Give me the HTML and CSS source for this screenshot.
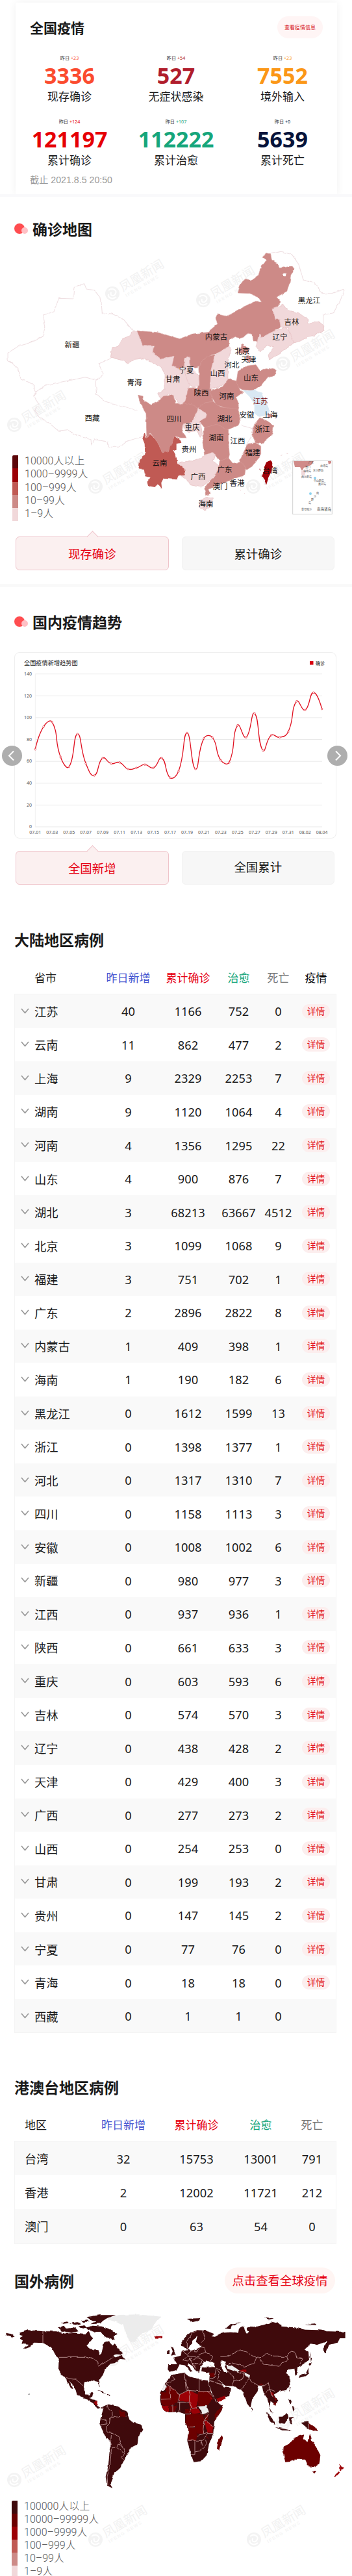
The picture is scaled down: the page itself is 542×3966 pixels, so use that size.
FILE: index.html
```html
<!DOCTYPE html>
<html lang="zh-CN">
<head>
<meta charset="utf-8">
<title>全国疫情</title>
<link rel="stylesheet" href="styles.css">
</head>
<body>
<main class="page">
  <section class="summary">
    <div class="summary-card">
      <header class="summary-head"><h1>全国疫情</h1><a class="info-pill">查看疫情信息</a></header>
      <div class="stats">
        <div class="stat orange"><small>昨日 <b>+23</b></small><strong>3336</strong><span>现存确诊</span></div>
        <div class="stat wine"><small>昨日 <b>+54</b></small><strong>527</strong><span>无症状感染</span></div>
        <div class="stat amber"><small>昨日 <b>+23</b></small><strong>7552</strong><span>境外输入</span></div>
        <div class="stat red"><small>昨日 <b>+124</b></small><strong>121197</strong><span>累计确诊</span></div>
        <div class="stat green"><small>昨日 <b>+107</b></small><strong>112222</strong><span>累计治愈</span></div>
        <div class="stat navy"><small>昨日 <b>+0</b></small><strong>5639</strong><span>累计死亡</span></div>
      </div>
      <p class="updated">截止 2021.8.5 20:50</p>
    </div>
  </section>

  <section class="map-section">
    <h2 class="dotted"><i class="dots"></i>确诊地图</h2>
    <div class="china-wrap">
      <svg class="china" viewBox="0 0 542 440" width="542" height="440">
        <defs>
          <filter id="coast" x="-2%" y="-2%" width="104%" height="104%" color-interpolation-filters="sRGB"><feTurbulence type="fractalNoise" baseFrequency=".12" numOctaves="2" seed="4"/><feDisplacementMap in="SourceGraphic" scale="3.5" xChannelSelector="R" yChannelSelector="G"/></filter>
          <g id="wm">
            <circle r="11" fill="#f3f3f3"/>
            <path d="M-6,-5C0,-10 8,-5 5,0S-4,4 -2,-2M6,5C0,10 -8,6 -6,1" fill="none" stroke="#fff" stroke-width="2"/>
            <g transform="rotate(-31)"><text x="15" y="6" class="wm-t">凤凰新闻</text><text x="16" y="16" class="wm-s">IFENG NEWS</text></g>
          </g>
        </defs>
        <use href="#wm" x="173" y="82"/><use href="#wm" x="313" y="92"/><use href="#wm" x="436" y="190"/>
        <use href="#wm" x="22" y="284"/><use href="#wm" x="147" y="379"/><use href="#wm" x="390" y="379"/>
        <g filter="url(#coast)">
        <g transform="scale(.3457 .3333)" class="prov">
          <path class="p0" d="M590,415 550,365 500,340 455,335 450,270 420,230 385,225 375,200 330,215 325,270 262,268 240,330 192,345 202,400 190,445 130,475 80,490 35,520 35,555 80,590 90,640 150,670 160,700 200,670 380,632 425,645 460,620 440,570 495,545"/>
          <path class="p0" d="M425,645 430,710 470,745 560,770 612,788M160,700 150,720 172,755 155,785 175,815 220,845 260,880 300,875 340,900 405,920 407,945 420,920 480,930 485,955 530,955 560,930 638,905M1205,62 1250,52 1300,65 1330,110 1350,180 1400,195 1435,245 1480,245 1535,225 1515,280 1485,335 1440,345 1440,392"/>
          <path class="p2" d="M609,418 700,425 750,440 800,455 860,432 925,425 970,385 960,360 968,342 1010,350 1080,310 1130,285 1165,285 1150,262 1110,245 1060,243 1070,205 1090,178 1120,185 1150,165 1165,115 1188,92 1170,80 1185,62 1205,65 1210,90 1232,105 1245,128 1270,125 1300,118 1313,135 1295,160 1290,195 1278,235 1232,262 1250,285 1235,305 1212,315 1225,365 1245,365 1253,395 1245,405 1200,430 1165,450 1155,432 1150,465 1128,465 1125,435 1105,428 1090,445 1070,452 1045,445 1020,460 1020,490 960,525 940,528 900,580 870,590 840,575 835,540 820,545 820,585 780,598 760,578 775,540 740,540 715,550 680,520 685,485 635,485Z"/>
          <path class="p2" d="M945,528 905,550 885,590 888,660 880,680 840,682 835,735 880,765 945,765 935,690 940,600 960,530Z"/>
          <path class="p1" d="M590,418 609,418 635,485 680,487 680,520 715,550 775,535 765,580 800,598 835,600 850,660 840,682 835,735 800,762 785,735 750,710 720,735 700,710 735,690 735,620 720,590 690,570 640,545 600,550 570,570 545,555 492,540 500,495 530,485 545,455 580,440Z"/>
          <path class="p1" d="M835,535 847,545 845,580 885,625 887,670 855,680 835,650 820,600 825,550Z"/>
          <path class="p1" d="M1020,490 1030,500 1015,560 1015,640 1000,665 935,692 940,600 955,535 985,510Z"/>
          <path class="p2" d="M1080,478 1110,500 1105,525 1060,520ZM1100,530 1120,545 1110,565 1095,550Z"/>
          <path class="p1" d="M1155,432 1165,450 1200,430 1270,400 1300,430 1308,475 1250,520 1200,552 1195,530 1218,495 1190,485 1160,515 1140,490Z"/>
          <path class="p1" d="M1212,315 1260,298 1290,325 1330,335 1370,365 1375,385 1420,375 1443,395 1440,415 1400,440 1370,445 1335,465 1308,475 1285,405 1250,400 1245,365 1225,365Z"/>
          <path class="p2" d="M1055,640 1060,605 1100,580 1140,575 1160,605 1190,590 1230,600 1225,620 1190,635 1165,670 1130,695 1080,690 1045,670Z"/>
          <ellipse cx="1268" cy="159" rx="9" ry="7" fill="#fff"/>
        </g>
        <g transform="translate(200 170) scale(.3333)" class="prov">
          <path class="p2" d="M38,205 60,210 65,230 100,250 130,235 155,210 200,205 210,240 235,250 260,230 300,245 315,268 300,300 285,335 250,340 240,360 260,405 235,405 205,395 195,430 175,465 150,472 125,420 95,380 78,405 75,290 50,250Z"/>
          <path class="p2" d="M270,175 375,180 385,235 350,240 340,275 300,255 255,240Z"/>
          <path class="p2" d="M455,130 490,140 510,185 525,190 490,215 505,250 500,275 460,270 400,250 365,190 430,165Z"/>
          <path class="p2" d="M345,240 385,235 420,260 500,270 510,325 500,345 450,365 400,345 345,355 320,325 355,300 315,268Z"/>
          <path class="p2" d="M345,355 400,340 455,365 455,420 460,480 455,500 415,510 385,470 345,480 335,420Z"/>
          <path class="p1" d="M315,268 355,290 350,310 325,325 335,385 325,400 310,370 270,375 240,350 250,335 285,335 300,310Z"/>
          <path class="blue" d="M520,180 545,185 575,180 610,195 625,235 645,280 640,295 600,305 575,290 575,250 560,220Z"/>
          <path class="p2" d="M640,290 665,300 640,312ZM600,310 635,325 665,345 655,390 610,430 580,425 565,380 575,340ZM545,430 580,425 605,440 605,480 570,530 540,550 505,520 520,480Z"/>
          <path class="p0" d="M515,345 570,360 565,390 540,430"/>
          <path class="p2" d="M415,510 455,495 475,520 510,515 535,540 530,575 450,600 385,630 365,640 372,660 350,668 345,635 390,580 410,545Z"/>
          <path class="p1" d="M220,520 300,505 345,485 380,470 395,480 385,510 410,530 400,560 370,600 330,630 280,620 265,595 235,580 255,550ZM325,690 360,675 385,680 380,715 345,740 320,720Z"/>
          <path class="p3" d="M68,380 78,405 95,385 125,420 150,472 175,465 195,430 205,395 230,410 235,425 215,430 215,455 200,460 215,490 220,520 257,550 250,575 225,580 215,595 155,590 145,610 148,638 130,615 115,630 85,625 80,605 95,585 70,580 65,545 40,545 45,510 70,475 68,430 58,405Z"/>
          <path class="p4" d="M650,505 658,520 655,555 640,585 630,617 612,580 620,540 630,515ZM598,545l3,0 1,12Z"/>
          <path d="M697,484l8,-2M722,472l5,0M508,645l3,3M528,655l4,3" stroke="#ccc" stroke-width="3"/>
        </g></g>
        <g class="inset">
          <rect x="450.7" y="339.5" width="60.6" height="82" fill="#fff" stroke="#d0d0d0"/>
          <path d="M452,340h31l-4,6 -11,4 -3,5 -3,-6 -8,0ZM505,340h5v3l-4,2Z" fill="#d08b89"/>
          <path d="M464,355h7l-2,7 -5,-1Z" fill="#f0d8da"/>
          <circle cx="485" cy="366" r="2" fill="#8dd3f0"/><circle cx="478" cy="390" r="2" fill="#8dd3f0"/>
          <g font-size="4"><text x="475" y="344">广东</text><text x="493" y="349">台湾岛</text><text x="470" y="351">澳门</text><text x="482" y="356">东沙群岛</text><text x="467" y="357">海南岛</text><text x="464" y="366">西沙群岛</text><text x="483" y="372">中山群岛</text><text x="490" y="377">黄岩岛</text><text x="487" y="391">南</text><text x="483" y="396">沙</text><text x="479" y="401">群</text><text x="475" y="406">岛</text><text x="464" y="416">曾母暗沙</text></g>
          <text x="488" y="416" font-size="5.5">南海诸岛</text>
        </g>
        <g id="labels"></g>
      </svg>
      <ul class="legend legend-cn"><li class="c5">10000人以上</li><li class="c4">1000–9999人</li><li class="c3">100–999人</li><li class="c2">10–99人</li><li class="c1">1–9人</li></ul>
    </div>
    <div class="tabs"><button class="tab active">现存确诊</button><button class="tab">累计确诊</button></div>
  </section>

  <section class="trend">
    <h2 class="dotted"><i class="dots"></i>国内疫情趋势</h2>
    <div class="chart-row">
      <div class="chart-card"><svg id="chart" viewBox="23 1005 494 285" width="494" height="285"></svg></div>
      <button class="arrow prev"><svg viewBox="0 0 31 31"><path d="M18,8.500 11,15.500 18,22.500"/></svg></button>
      <button class="arrow next"><svg viewBox="0 0 31 31"><path d="M13,8.500 20,15.500 13,22.500"/></svg></button>
    </div>
    <div class="tabs"><button class="tab active">全国新增</button><button class="tab raised">全国累计</button></div>
  </section>

  <section class="mainland">
    <h2>大陆地区病例</h2>
    <div class="row head"><span class="name">省市</span><span class="blue-t">昨日新增</span><span class="red-t">累计确诊</span><span class="green-t">治愈</span><span class="grey-t">死亡</span><span class="black-t">疫情</span></div>
    <div class="rows" id="rows"></div>
  </section>

  <section class="hmt">
    <h2>港澳台地区病例</h2>
    <div class="row head"><span class="name">地区</span><span class="blue-t">昨日新增</span><span class="red-t">累计确诊</span><span class="green-t">治愈</span><span class="grey-t">死亡</span></div>
    <div class="rows">
      <div class="row"><span class="name">台湾</span><span>32</span><span>15753</span><span>13001</span><span>791</span></div>
      <div class="row"><span class="name">香港</span><span>2</span><span>12002</span><span>11721</span><span>212</span></div>
      <div class="row"><span class="name">澳门</span><span>0</span><span>63</span><span>54</span><span>0</span></div>
    </div>
  </section>

  <section class="world">
    <div class="world-head"><h2>国外病例</h2><a class="global-pill">点击查看全球疫情</a></div>
    <svg class="world-map" viewBox="0 0 542 416" width="542" height="416">
      <use href="#wm" x="173" y="82"/><use href="#wm" x="313" y="85"/><use href="#wm" x="436" y="180"/><use href="#wm" x="22" y="268"/><use href="#wm" x="147" y="360"/><use href="#wm" x="391" y="360"/>
      <g filter="url(#coast)">
      <g transform="scale(.3333)">
        <path class="w0" d="M490,60 550,42 640,40 745,50 720,75 700,110 650,130 620,168 600,165 580,130 570,90 545,78Z"/>
        <path class="w5" d="M90,125 125,112 200,118 260,118 300,128 350,125 395,130 410,120 420,140 430,150 400,185 430,205 455,205 460,225 470,215 480,170 500,160 520,180 530,175 550,200 568,220 520,232 540,240 560,225 580,248 555,245 530,265 510,268 485,295 475,320 455,345 462,377 450,350 415,345 390,355 385,385 395,410 415,415 420,400 432,400 425,420 410,430 445,435 445,460 465,475 478,465 475,475 450,475 430,450 395,430 355,408 350,390 320,345 335,385 328,382 300,330 280,310 270,290 272,245 255,225 240,195 200,172 160,170 140,190 105,203 130,180 100,175 105,160 88,150 105,140ZM28,125 50,130 68,142 55,146 30,136ZM270,100 295,92 305,105 350,100 365,118 330,125 280,115ZM400,100 430,92 470,95 500,105 540,130 525,140 530,158 505,150 480,140 465,120 430,120 410,112ZM360,95l30,-5 12,12 -18,6ZM320,82l35,-6 20,6 -30,6ZM285,78l25,-5 8,6 -25,4ZM375,68l28,-4 10,9 -28,2ZM400,52l60,-9 75,0 -40,14 -20,13 -12,12 -45,3 28,-16 -26,-3ZM450,390 475,395 490,406 470,402ZM495,410l15,1 -4,5 -14,-2Z"/>
        <path class="w5" d="M480,465 500,455 520,460 545,465 585,490 600,530 620,540 655,550 658,570 640,600 635,640 605,655 590,690 570,720 555,750 530,765 520,800 510,825 520,843 495,830 488,790 500,740 510,630 485,600 460,545 465,520Z"/>
        <path class="w4" d="M550,480 560,490 577,490 578,510 555,512Z"/>
        <path class="w3" d="M712,142 750,140 750,150 722,152ZM450,437 448,460 432,448Z"/>
        <path class="b" d="M198,118V172M272,238H400L430,245 452,258 455,280 520,240M305,335 350,340 385,370M495,457 500,475 518,490 520,515 508,520 505,545 490,560 495,580 515,585 550,605 560,640 545,640 540,655 515,655 508,740 495,790 498,828M515,585 510,650M560,640 578,680 560,700 575,715M540,655 575,682M462,520 490,530 495,545 465,550M520,515 555,512M578,510l10,-2"/>
        <circle cx="135" cy="408" r="3" fill="#999"/>
      </g>
      <g transform="translate(240) scale(.3333)">
        <path class="w5" d="M118,165 150,130 190,112 230,115 270,130 265,140 300,125 345,122 380,125 385,105 405,95 420,130 430,120 420,100 470,95 540,75 580,85 580,95 640,100 690,110 750,112 800,118 875,120 875,150 850,150 840,170 800,180 785,222 770,205 790,165 745,180 715,175 685,200 705,215 708,250 680,270 650,285 655,310 645,320 640,290 610,295 600,310 620,325 622,360 600,390 570,395 545,410 563,440 550,455 530,440 525,470 540,500 530,490 515,430 500,410 490,370 475,370 470,395 445,430 437,472 420,450 405,400 390,385 360,372 320,370 348,385 340,410 280,445 265,420 245,360 250,310 210,302 213,285 245,272 225,255 205,285 200,310 185,300 170,280 150,265 145,275 170,300 160,305 135,275 110,270 100,290 85,300 65,305 55,295 58,270 95,270 80,240 115,230 120,210 145,205 135,190 120,185Z"/>
        <path fill="#fff" d="M170,160 192,142 185,170 212,185 188,200 160,207 150,197ZM215,262 240,252 265,262 275,282 220,285ZM303,252 325,258 318,280 332,305 315,306 300,280ZM300,350 328,372 318,378ZM275,125l12,10 -14,8 -20,-3Z"/>
        <path class="w0" d="M325,272 350,275 385,298 380,308 330,290ZM410,308 435,320 432,334 412,325Z"/>
        <path class="w5" d="M68,185 78,190 95,225 70,230 78,210ZM52,212 65,204 62,222 51,222ZM143,60 205,57 200,68 170,75ZM322,105 345,85 390,76 350,92 345,108ZM500,55l45,6 -20,6ZM690,85l45,-3 10,8ZM712,212l6,30 -5,18ZM720,260l-8,18 -6,-7ZM705,285l0,27 -15,13 -30,8 5,-12 28,-6ZM645,300l10,8 -5,12 -8,-3ZM615,375l7,3 -6,22ZM440,470l6,10 -4,8ZM508,490 535,515 552,550 530,540ZM550,560l40,8 38,8 -45,-1ZM565,515l20,0 20,-20 5,20 -12,30 -28,-5ZM615,515l25,-2 -15,10 5,25 -12,-5ZM615,430l12,12 -4,15ZM630,465l14,6 -10,18ZM670,540l35,-5 5,38 -25,-20Z"/>
        <path class="w5" d="M70,320 130,308 150,325 200,340 240,345 255,400 275,440 300,460 312,458 300,490 270,535 265,590 245,640 235,690 210,718 175,722 160,680 145,620 152,570 135,540 135,500 105,490 60,492 35,480 20,455 20,400 50,350Z"/>
        <path class="w4" d="M22,400 45,400 45,372 65,372 110,410 100,445 60,465 25,455ZM195,395 250,395 262,430 240,460 200,465 190,430ZM160,500 215,500 225,530 220,590 190,590 180,560 150,560 135,540 140,505ZM150,560 185,565 190,600 185,625 148,622ZM312,458 300,490 272,530 272,500 290,480ZM250,312 272,310 268,328 250,330ZM305,598 310,610 295,668 282,660 288,620ZM225,505l15,-3 0,25 -14,3ZM60,465l35,-7 -5,32 -25,0ZM135,480l20,-5 5,20 -22,2Z"/>
        <path class="w4" d="M590,650 620,635 640,610 665,600 685,595 680,615 700,630 712,590 722,625 745,660 760,690 755,730 735,745 705,742 690,710 650,710 620,720 598,722 588,680ZM723,763 738,762 730,775ZM706,540 735,560 748,580 705,570ZM545,445l15,0 -5,15 -12,-3Z"/>
        <path class="w3" d="M110,410 155,390 195,410 190,470 160,475 150,440 105,440ZM160,480 190,470 205,495 170,500ZM225,530 260,550 263,588 235,585ZM280,430 320,415 322,430 285,448ZM0,140 30,140 28,150 5,150ZM25,460 60,465 60,490 35,480ZM250,420l18,14 -14,2ZM390,295l28,0 0,10 -25,0ZM530,397l12,5 2,15 -12,-8ZM850,730 858,745 868,748 850,762ZM845,765 850,770 830,792 820,788ZM238,595l7,20 -6,-5ZM540,412l15,22 -5,4ZM475,360l16,0 -3,5Z"/>
        <path class="w0" d="M25,390 45,358 50,372 40,390ZM195,465 235,462 245,490 220,500Z"/>
        <path class="b" d="M75,325 88,340 48,358 65,375 110,410 150,390 135,345 130,310M135,345 140,390 200,395V342M200,395H255M65,372 68,430 25,432M110,410 105,440M155,390 155,440 165,475 190,470M100,445H155M110,445V490M78,455V490M135,500H160L160,475M205,495 235,500 245,490M240,500 225,530 220,590M225,530 265,560M180,560 150,560M150,622H215L240,590 265,590M180,625V685L160,688M180,675 205,670 235,640 230,620M210,625 215,650M190,600 240,585M120,210 145,225 165,208 190,210 205,190 225,195 230,215 200,225 195,235 165,235 145,230 125,250 145,255 165,240M165,252 195,240 215,250 205,270 170,268 180,285M150,240 165,255 185,290M230,215 265,235 250,258M145,205 145,160 170,125 190,115M215,115 225,155 210,170M250,275 280,285 295,310 285,345 300,350M280,285 270,330 248,340M295,235 320,235 360,220 390,203 425,215 440,230 465,238 455,265 410,280 345,262 335,270M300,300 285,285M465,238 490,235 515,220 540,235 605,235 610,250 585,260 570,280 500,270 480,245M605,235 625,210 645,215 650,240 678,245 665,270M385,298 410,308 400,340 360,350 355,370M375,305 395,310 430,330 440,350 480,370 500,370 520,355 525,385 550,395M360,350 355,325 330,300M395,390 410,365 430,335M500,410 525,385 540,420M245,345 310,365M706,540V570M240,395 265,420"/>
      </g></g>
    </svg>
    <ul class="legend legend-world"><li class="c6">100000人以上</li><li class="c5b">10000–99999人</li><li class="c4">1000–9999人</li><li class="c3">100–999人</li><li class="c2">10–99人</li><li class="c1">1–9人</li></ul>
  </section>
</main>
<script src="app.js"></script>
</body>
</html>
```
FILE: styles.css
```css
* { box-sizing: border-box; }
body { margin: 0; background: #fff; color: #1a1a1a; font-family: "Noto Sans", "Noto Sans CJK SC", sans-serif; }
.page { width: 542px; height: 3966px; overflow: hidden; }
h1, h2, p, ul { margin: 0; padding: 0; }
h2 { font: 700 23px/30px "Noto Sans CJK SC", sans-serif; color: #1a1a1a; white-space: nowrap; }
button { border: 0; padding: 0; margin: 0; }

.summary { height: 303px; padding: 4px 23px 0 24px; background: #fff; border-bottom: 4px solid #f9f9fb; overflow: hidden; }
.summary-card { height: 296px; padding: 20px 22px 0; box-shadow: 0 0 12px rgba(0,0,0,.06); }
.summary-head { display: flex; justify-content: space-between; height: 36px; align-items: center; }
.summary-head h1 { font: 700 21px/30px "Noto Sans CJK SC", sans-serif; }
.info-pill { width: 70px; height: 34px; border-radius: 17px; background: #fff5f5; color: #d7141e; font: 8px/33px "Noto Sans CJK SC", sans-serif; text-align: center; }
.stats { display: grid; grid-template-columns: 164px 164px 164px; margin: 20px -22px 0 -21px; row-gap: 9px; }
.stat { height: 89px; display: flex; flex-direction: column; align-items: center; }
.stat small { font-size: 7.200px; line-height: 18px; color: #333; }
.stat small b { font-weight: 400; color: var(--c); }
.stat strong { font: 700 34px/36px "Noto Sans", sans-serif; color: var(--c); }
.stat span { font: 17px/27px "Noto Sans CJK SC", sans-serif; }
.orange { --c: #fb4b2f; } .wine { --c: #b01d2c; } .amber { --c: #fb9717; }
.red { --c: #e60005; } .green { --c: #16a67b; } .navy { --c: #07143b; }
.updated { margin-top: 0; font: 14.200px/20px "Liberation Sans", "Noto Sans CJK SC", sans-serif; color: #9b9b9b; }

.map-section { height: 601px; border-bottom: 5px solid #f9f9f9; padding-top: 34px; }
.dotted { display: flex; align-items: center; padding-left: 22px; }
.dots { position: relative; width: 28px; height: 17px; flex: none; }
.dots::before, .dots::after { content: ""; position: absolute; border-radius: 50%; }
.dots::before { width: 16px; height: 16px; left: 0; top: 0; background: #ff4d50; }
.dots::after { width: 10px; height: 10px; left: 11px; top: 6px; background: #ffc0c5; }
.china-wrap { position: relative; height: 459px; padding-top: 3px; }
.china, .world-map { display: block; }
.wm-t { font: 19px "Noto Sans CJK SC", sans-serif; fill: #f2f2f2; }
.wm-s { font: 700 7px "Liberation Sans", sans-serif; fill: #f5f5f5; letter-spacing: 1.500px; }
.prov path { stroke: #e9c5c7; stroke-width: 2.500; stroke-linejoin: round; }
.prov .p0 { fill: none; stroke: #efdfe2; stroke-width: 3; }
.prov .p1 { fill: #f1d8da; } .prov .p2 { fill: #cd8a87; stroke: #d69b98; stroke-width: 2; }
.prov .p3 { fill: #c05a54; stroke: none; } .prov .p4 { fill: #a00008; stroke: none; } .prov .blue { fill: #d9e8f3; stroke: none; }
.w0 { fill: #ececec; } .w3 { fill: #9c0006; } .w4 { fill: #6c0000; } .w5 { fill: #3f0a0c; }
.b { fill: none; stroke: #c9a3a3; stroke-width: 2.500; }
.label { font: 11.500px "Noto Sans CJK SC", sans-serif; fill: #111; text-anchor: middle; }
.label.hot { fill: #7a1523; }
.inset text { font-family: "Noto Sans CJK SC", sans-serif; fill: #444; }
.legend { list-style: none; font: 300 16px/18px Roboto, "Noto Sans CJK SC", sans-serif; color: #555; }
.legend li { height: 20.300px; padding-left: 10px; border-left: 9px solid; white-space: nowrap; }
.legend-cn { position: absolute; left: 19px; top: 334px; }
.legend .c6 { border-color: #3f0a0c; } .legend .c5b { border-color: #6b0000; } .legend .c5 { border-color: #5c060a; }
.legend .c4 { border-color: #9c0006; } .legend .c3 { border-color: #c05a54; } .legend .c2 { border-color: #cd8a87; } .legend .c1 { border-color: #f1d8da; }
.legend li:first-child { border-top-left-radius: 2px; }

.tabs { display: flex; gap: 20px; padding: 0 27px 0 24px; }
.tab { position: relative; width: 236px; height: 52px; border-radius: 6px; background: #f7f7f7; border: 1px solid #f2f2f2; font: 18.400px/50px "Noto Sans CJK SC", sans-serif; color: #1a1a1a; }
.tab.active { background: #fbf0f0; border-color: #efc4ca; color: #e60012; }
.tab.active::before { content: ""; position: absolute; left: 111px; top: -7px; width: 12px; height: 12px; border: solid #efc4ca; border-width: 1px 0 0 1px; background: linear-gradient(135deg, #fbf0f0 58%, transparent 58%); transform: rotate(45deg); }
.tab.raised { line-height: 46px; padding-bottom: 4px; }

.trend { height: 527px; padding-top: 38px; }
.chart-row { position: relative; height: 338px; padding: 32px 0 0 22px; }
.chart-card { width: 496px; height: 287px; border: 1px solid #efefef; border-radius: 8px; }
.chart-card svg { display: block; }
.chart-card text { font: 7px "Noto Sans", "Noto Sans CJK SC", sans-serif; fill: #555; }
.chart-card .title { font-size: 9.200px; fill: #222; }
.arrow { position: absolute; top: 176px; width: 31px; height: 31px; border-radius: 50%; background: #aeaeae; }
.arrow svg { display: block; fill: none; stroke: #fff; stroke-width: 2; }
.prev { left: 3px; } .next { left: 504px; }

.row { display: grid; align-items: center; text-align: center; white-space: nowrap; font-size: 18.300px; }
.row.head { font: 17px/24px "Noto Sans CJK SC", sans-serif; }
.row .name { position: relative; text-align: left; font-family: "Noto Sans CJK SC", sans-serif; }
.rows { margin: 0 24px 0 22px; border: 1px solid #f4f4f4; }
.rows .row:nth-child(odd) { background: #f9f9f9; }
.mainland { height: 1741px; padding-top: 0; }
.mainland h2, .hmt h2 { padding-left: 22px; }
.mainland .row { grid-template-columns: 96px 97px 87px 69px 53px 63px; padding-left: 30px; }
.mainland .rows .row { height: 51.570px; }
.mainland .head { margin: 32px 24px 13px 23px; }
.name svg { position: absolute; left: -21px; top: 8px; width: 13px; height: 9px; fill: none; stroke: #999; stroke-width: 1.700; }
.detail { justify-self: center; width: 43px; height: 22px; border-radius: 11px; background: #fceeee; color: #e31620; font: 13.800px/21px "Noto Sans CJK SC", sans-serif; }
.blue-t { color: #4455d0; } .red-t { color: #e60012; } .green-t { color: #16a67b; } .grey-t { color: #777; } .black-t { color: #000; }

.hmt { height: 317px; padding-top: 26px; }
.hmt .row { grid-template-columns: 98px 108px 117px 81px 77px; padding-left: 15px; }
.hmt .head { margin: 31px 24px 13px 23px; }
.hmt .rows .row { height: 52.200px; }

.world { height: 477px; position: relative; }
.world-head { display: flex; justify-content: space-between; align-items: center; height: 61px; padding: 0 26px 18px 22px; }
.global-pill { width: 170px; height: 40px; border-radius: 20px; background: #fff5f3; color: #e60012; font: 18.400px/38px "Noto Sans CJK SC", sans-serif; text-align: center; }
.legend-world { position: absolute; left: 18px; top: 361px; }
.legend-world li { height: 20px; line-height: 17px; }
.legend-world li:last-child { height: 16px; }
```
FILE: app.js
```javascript
const NS = 'http://www.w3.org/2000/svg';

// Province names: text, x, y (centre of the label)
const names = [['新疆',111,161],['青海',207,219],['甘肃',266,214],['宁夏',287,200],['陕西',310,235],['山西',335,205],['河北',357,192],['北京',373,171],['天津',383,184],['山东',386.5,212],['河南',349,240],['江苏',401,248],['内蒙古',333,149],['辽宁',431,149],['吉林',449,126],['黑龙江',476,93],['四川',268,275],['重庆',296,288],['湖北',346,275],['安徽',380,269],['上海',416,269],['浙江',404,291],['湖南',333,304],['江西',366,309],['贵州',291,322],['福建',389,327],['云南',246,343],['广东',346,353],['台湾',416,355],['广西',305,364],['香港',365,374],['澳门',339,379],['海南',317,406],['西藏',142,274]];
document.getElementById('labels').innerHTML = names.map(([t, x, y]) =>
  `<text class="label${t === '江苏' ? ' hot' : ''}" x="${x}" y="${y + 4}">${t}</text>`).join('');

// Daily new cases, 07.01 to 08.04
const data = [71,92,96,64,55,85,58,47,63,58,59,53,54,57,54,63,45,51,86,53,81,82,61,59,93,82,104,70,84,82,87,115,107,123,108];
const X = i => 54.3 + i * 441.4 / 34, Y = v => 1273 - v * 235.3 / 140;
const pts = data.map((v, i) => [X(i), Y(v)]);
const dist = (a, b) => Math.hypot(a[0] - b[0], a[1] - b[1]);
const cps = pts.map((p, i) => {
  const a = pts[i - 1], b = pts[i + 1];
  if (!a || !b) return [p, p];
  const d0 = dist(a, p), d1 = dist(p, b), vx = (b[0] - a[0]) * .5, vy = (b[1] - a[1]) * .5, s = d0 + d1;
  return [[p[0] - vx * d0 / s, p[1] - vy * d0 / s], [p[0] + vx * d1 / s, p[1] + vy * d1 / s]];
});
let d = `M${pts[0]}`;
for (let i = 1; i < pts.length; i++) d += `C${cps[i - 1][1]} ${cps[i][0]} ${pts[i]}`;
let out = '<text class="title" x="37" y="1023.500">全国疫情新增趋势图</text><rect x="477" y="1018" width="5.500" height="5.500" fill="#d9000f"/><text x="486" y="1023.500" style="fill:#111">确诊</text>';
for (let v = 0; v <= 140; v += 20)
  out += `<path d="M54.300,${Y(v)}H496" stroke="#e9e9e9"/><text x="49" y="${Y(v) + 2.3}" text-anchor="end">${v}</text>`;
out += `<path d="M54.300,1037V1273" stroke="#f0f0f0"/>`;
for (let i = 0; i < 35; i += 2) {
  const t = i < 31 ? `07.${String(i + 1).padStart(2, '0')}` : `08.${String(i - 30).padStart(2, '0')}`;
  out += `<text x="${X(i)}" y="1283.500" text-anchor="middle">${t}</text>`;
}
out += `<path d="${d}" fill="none" stroke="#e01020" stroke-width="1.300"/>` + pts.map(p => `<circle cx="${p[0]}" cy="${p[1]}" r="1.300" fill="#fff" stroke="#e01020" stroke-width=".6"/>`).join('');
document.getElementById('chart').innerHTML = out;

const rows = `江苏 40 1166 752 0|云南 11 862 477 2|上海 9 2329 2253 7|湖南 9 1120 1064 4|河南 4 1356 1295 22|山东 4 900 876 7|湖北 3 68213 63667 4512|北京 3 1099 1068 9|福建 3 751 702 1|广东 2 2896 2822 8|内蒙古 1 409 398 1|海南 1 190 182 6|黑龙江 0 1612 1599 13|浙江 0 1398 1377 1|河北 0 1317 1310 7|四川 0 1158 1113 3|安徽 0 1008 1002 6|新疆 0 980 977 3|江西 0 937 936 1|陕西 0 661 633 3|重庆 0 603 593 6|吉林 0 574 570 3|辽宁 0 438 428 2|天津 0 429 400 3|广西 0 277 273 2|山西 0 254 253 0|甘肃 0 199 193 2|贵州 0 147 145 2|宁夏 0 77 76 0|青海 0 18 18 0|西藏 0 1 1 0`.split('|');
document.getElementById('rows').innerHTML = rows.map(r => {
  const [n, ...c] = r.split(' ');
  return `<div class="row"><span class="name"><svg viewBox="0 0 13 9"><path d="M1,1 6.500,7.500 12,1"/></svg>${n}</span>${c.map(v => `<span>${v}</span>`).join('')}${n === '西藏' ? '' : '<a class="detail">详情</a>'}</div>`;
}).join('');
```
